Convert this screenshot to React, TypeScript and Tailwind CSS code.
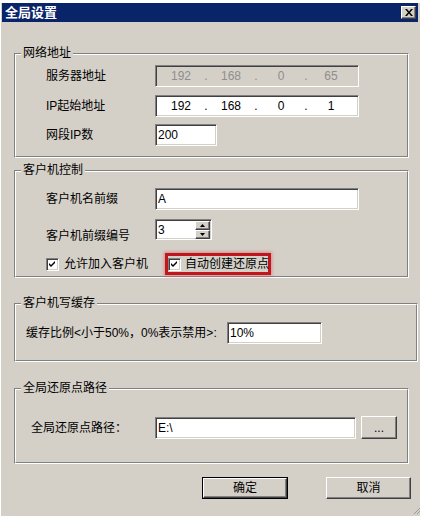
import React from 'react'

const sunken =
  'border border-t-[#808080] border-l-[#808080] border-b-white border-r-white shadow-[inset_1px_1px_0_#404040,inset_-1px_-1px_0_#d4d0c8]'
const raised =
  'border border-t-white border-l-white border-b-[#404040] border-r-[#404040] shadow-[inset_-1px_-1px_0_#808080]'

const Group: React.FC<{ title: string; className?: string; children: React.ReactNode }> = ({
  title,
  className = '',
  children,
}) => (
  <div
    className={`relative border border-t-[#808080] border-l-[#808080] border-b-white border-r-white ${className}`}
  >
    <div className="h-full border border-t-white border-l-white border-b-[#808080] border-r-[#808080]">
      {children}
    </div>
    {/* 分组标题压在边框上 */}
    <span className="absolute left-[6px] top-[-8px] bg-[#d4d0c8] px-[2px] leading-[14px]">{title}</span>
  </div>
)

const Field: React.FC<{ value: string; className?: string }> = ({ value, className = '' }) => (
  <div className={`h-[22px] bg-white ${sunken} flex items-center pl-[2px] ${className}`}>
    <span className="text-[12px] leading-none">{value}</span>
  </div>
)

const IpField: React.FC<{ parts: string[]; disabled?: boolean }> = ({ parts, disabled }) => (
  <div
    className={`h-[22px] w-[204px] ${sunken} flex items-center pl-[6px] ${
      disabled ? 'bg-[#d4d0c8] text-[#8e8e8e]' : 'bg-white text-black'
    }`}
  >
    {parts.map((p, i) => (
      <React.Fragment key={i}>
        <span className="w-[38px] text-center text-[12px] leading-none">{p}</span>
        {i < 3 && <span className="w-[12px] text-center text-[12px] leading-none">.</span>}
      </React.Fragment>
    ))}
  </div>
)

const CheckBox: React.FC = () => (
  <div className={`shrink-0 w-[13px] h-[13px] bg-white ${sunken} flex items-center justify-center`}>
    <svg width="7" height="7" viewBox="0 0 7 7">
      <path d="M0 2 L2 4 L6 0 L6 2 L2 6 L0 4 Z" fill="#000" />
    </svg>
  </div>
)

const Button: React.FC<{ label: string; isDefault?: boolean; className?: string }> = ({
  label,
  isDefault,
  className = '',
}) =>
  isDefault ? (
    <div className={`border border-black ${className}`}>
      <div className={`h-full ${raised} flex items-center justify-center`}>{label}</div>
    </div>
  ) : (
    <div className={`${raised} flex items-center justify-center ${className}`}>{label}</div>
  )

export default function App() {
  return (
    <div className="min-h-[516px] bg-white pt-[3px] pl-[1px] text-black text-[12px] whitespace-nowrap font-['Liberation_Sans','Noto_Sans_CJK_SC',sans-serif]">
      <div className="relative w-[419px] h-[513px] bg-[#d4d0c8] flex flex-col">
        {/* 标题栏 */}
        <div className="ml-[1px] mr-[2px] h-[19px] bg-[#0a246a] flex items-center justify-between pl-[3px] pr-[2px]">
          <span className="text-white font-bold text-[13px] leading-none">全局设置</span>
          <div className={`w-[15px] h-[13px] bg-[#d4d0c8] ${raised} flex items-center justify-center`}>
            <svg width="8" height="7" viewBox="0 0 8 7">
              <path d="M0 0 L2 0 L4 2.5 L6 0 L8 0 L5 3.5 L8 7 L6 7 L4 4.5 L2 7 L0 7 L3 3.5 Z" fill="#000" />
            </svg>
          </div>
        </div>

        {/* 网络地址 */}
        <Group title="网络地址" className="ml-[13px] mt-[31px] w-[395px] h-[105px]">
          <div className="flex flex-col pt-[10px] pl-[30px] gap-[8px]">
            <div className="flex items-center h-[22px]">
              <span className="w-[109px]">服务器地址</span>
              <IpField parts={['192', '168', '0', '65']} disabled />
            </div>
            <div className="flex items-center h-[22px]">
              <span className="w-[109px]">IP起始地址</span>
              <IpField parts={['192', '168', '0', '1']} />
            </div>
            <div className="flex items-center h-[22px] -mt-[1px]">
              <span className="w-[109px]">网段IP数</span>
              <Field value="200" className="w-[62px]" />
            </div>
          </div>
        </Group>

        {/* 客户机控制 */}
        <Group title="客户机控制" className="ml-[13px] mt-[12px] w-[395px] h-[108px]">
          <div className="flex flex-col pt-[16px] pl-[30px]">
            <div className="flex items-center h-[21px]">
              <span className="w-[109px]">客户机名前缀</span>
              <Field value="A" className="w-[204px] h-[21px]" />
            </div>
            <div className="flex items-start mt-[10px] h-[21px]">
              <span className="w-[109px] mt-[8px]">客户机前缀编号</span>
              <div className={`relative w-[57px] h-[21px] bg-white ${sunken} flex items-center pl-[2px]`}>
                <span>3</span>
                <div className="absolute right-[1px] top-[1px] flex flex-col w-[15px]">
                  <div className={`h-[9px] bg-[#d4d0c8] ${raised} flex items-center justify-center`}>
                    <svg width="5" height="3" viewBox="0 0 5 3">
                      <path d="M2.5 0 L5 3 L0 3 Z" fill="#000" />
                    </svg>
                  </div>
                  <div className={`h-[9px] bg-[#d4d0c8] ${raised} flex items-center justify-center`}>
                    <svg width="5" height="3" viewBox="0 0 5 3">
                      <path d="M0 0 L5 0 L2.5 3 Z" fill="#000" />
                    </svg>
                  </div>
                </div>
              </div>
            </div>
            <div className="flex items-center mt-[13px] h-[22px]">
              <CheckBox />
              <span className="ml-[5px]">允许加入客户机</span>
              <div className="ml-[17px] w-[106px] h-[22px] border-[3px] border-[#c0161e] shadow-[0_0_3px_1px_rgba(220,90,90,0.55)] flex items-center overflow-visible">
                <CheckBox />
                <span className="ml-[4px]">自动创建还原点</span>
              </div>
            </div>
          </div>
        </Group>

        {/* 客户机写缓存 */}
        <Group title="客户机写缓存" className="ml-[13px] mt-[25px] w-[404px] h-[59px]">
          <div className="flex items-center pt-[17px] pl-[10px]">
            <span className="w-[201px]">缓存比例&lt;小于50%，0%表示禁用&gt;:</span>
            <Field value="10%" className="w-[95px] h-[21px]" />
          </div>
        </Group>

        {/* 全局还原点路径 */}
        <Group title="全局还原点路径" className="ml-[13px] mt-[26px] w-[395px] h-[76px]">
          <div className="flex items-center pt-[26px] pl-[15px]">
            <span className="w-[124px]">全局还原点路径：</span>
            <Field value="E:\" className="w-[201px]" />
            <Button label="..." className="ml-[5px] w-[36px] h-[23px]" />
          </div>
        </Group>

        {/* 底部按钮 */}
        <div className="flex mt-[13px] pl-[201px] gap-[38px]">
          <Button label="确定" isDefault className="w-[86px] h-[22px]" />
          <Button label="取消" className="w-[85px] h-[22px]" />
        </div>

        {/* 右下角拖拽手柄 */}
        <svg className="absolute right-[0px] bottom-[2px]" width="6" height="8" viewBox="0 0 6 8">
          <path d="M6 2 L0 8 M6 5 L3 8" stroke="#9a9a9a" strokeWidth="1" />
        </svg>
      </div>
    </div>
  )
}
